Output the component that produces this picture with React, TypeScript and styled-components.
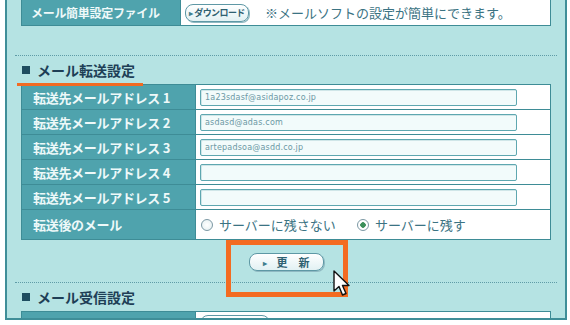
import styled, { createGlobalStyle } from "styled-components";

const GlobalStyle = createGlobalStyle`
  html, body {
    margin: 0;
    padding: 0;
    background: #ffffff;
    overflow: hidden;
  }
  body {
    font-family: "Noto Sans CJK JP", "Noto Sans", sans-serif;
  }
`;

const Page = styled.div`
  width: 570px;
  height: 325px;
  padding-left: 5px;
  box-sizing: border-box;
  background: #ffffff;
`;

const Panel = styled.div`
  width: 562px;
  height: 320px;
  box-sizing: border-box;
  background: #b5e3e3;
  border: 2px solid #3f8e98;
  border-top: none;
  padding: 0 14px;
  overflow: hidden;
`;

const Table = styled.div<{ $top?: boolean }>`
  border: 1px solid #3e8c96;
  border-top: ${(p) => (p.$top ? "none" : "1px solid #3e8c96")};
  background: #ffffff;
`;

const Row = styled.div<{ $label?: number; $h?: number }>`
  display: grid;
  grid-template-columns: ${(p) => p.$label ?? 174}px 1fr;
  height: ${(p) => p.$h ?? 24}px;
  & + & {
    border-top: 1px solid #3e8c96;
  }
`;

const Label = styled.div`
  background: #4fa3ad;
  color: #eef9f9;
  font-size: 13px;
  font-weight: bold;
  display: flex;
  align-items: center;
  padding-left: 11px;
  border-right: 1px solid #3e8c96;
  white-space: nowrap;
  letter-spacing: -0.3px;
`;

const SmallLabel = styled(Label)`
  font-size: 12px;
  padding-left: 9px;
`;

const Value = styled.div`
  display: flex;
  align-items: center;
  padding-left: 4px;
  gap: 8px;
  color: #3b7383;
  font-size: 13px;
  white-space: nowrap;
`;

const Input = styled.div`
  width: 317px;
  height: 17px;
  box-sizing: border-box;
  border: 1px solid #5ea7b0;
  border-radius: 2px;
  background: #f2fbfb;
  box-shadow: inset 1px 1px 0 #cfe6e8;
  font-family: "DejaVu Sans", sans-serif;
  font-size: 8px;
  color: #6b98a4;
  line-height: 15px;
  padding-left: 4px;
  letter-spacing: 0.2px;
`;

const PillButton = styled.div<{ $w: number; $size?: number; $gap?: number }>`
  width: ${(p) => p.$w}px;
  height: 18px;
  box-sizing: border-box;
  border: 1.5px solid #5e98a5;
  border-radius: 8px;
  background: linear-gradient(#ffffff, #e2f1f3);
  box-shadow: 1px 1px 0 #8fb9c2;
  color: #2f6171;
  font-size: ${(p) => p.$size ?? 10}px;
  font-weight: bold;
  display: flex;
  align-items: center;
  justify-content: center;
  gap: ${(p) => p.$gap ?? 10}px;
  white-space: nowrap;
  overflow: hidden;
`;

const Arrow = styled.span`
  font-size: 8px;
  color: #3f7f8e;
`;

const TinyText = styled.span`
  font-size: 9px;
  letter-spacing: -0.6px;
`;

const Note = styled.span`
  margin-left: 8px;
  font-size: 13px;
  color: #3b7383;
`;

const Divider = styled.div<{ $mt: number }>`
  margin: ${(p) => p.$mt}px -6px 0 -6px;
  border-top: 1px dotted #5f9ca7;
`;

const Heading = styled.div<{ $h: number }>`
  position: relative;
  height: ${(p) => p.$h}px;
  display: flex;
  align-items: center;
  gap: 7px;
  padding-left: 1px;
  font-size: 14px;
  font-weight: bold;
  color: #1e3f56;
`;

const Square = styled.span`
  width: 8px;
  height: 8px;
  background: #1f4d60;
`;

const Underline = styled.span`
  position: absolute;
  left: -4px;
  bottom: -2px;
  width: 126px;
  height: 3px;
  background: #f26b22;
`;

const Radio = styled.span<{ $on?: boolean }>`
  width: 12px;
  height: 12px;
  box-sizing: border-box;
  border-radius: 50%;
  border: 1px solid #7c98a4;
  background: radial-gradient(
    circle,
    ${(p) => (p.$on ? "#3c8f5a 0 2.5px, #ffffff 3px" : "#ffffff 0, #e3eef0 100%")}
  );
  margin-left: 1px;
`;

const RadioLabel = styled.label`
  display: flex;
  align-items: center;
  gap: 6px;
  margin-right: 12px;
  color: #3b7383;
  font-size: 13px;
`;

const ButtonArea = styled.div`
  height: 42px;
  display: flex;
  justify-content: center;
  padding-top: 13px;
  box-sizing: border-box;
`;

const Highlight = styled.div`
  position: relative;
`;

const HighlightBox = styled.span`
  position: absolute;
  left: -23px;
  right: -24px;
  top: -13px;
  bottom: -15px;
  border: 5px solid #f36b21;
  pointer-events: none;
`;

const Cursor = styled.svg`
  position: absolute;
  left: 84px;
  top: 17px;
`;

const addresses = [
  "1a23sdasf@asidapoz.co.jp",
  "asdasd@adas.com",
  "artepadsoa@asdd.co.jp",
  "",
  "",
];

export default function App() {
  return (
    <Page>
      <GlobalStyle />
      <Panel>
        <Table $top>
          <Row $label={159} $h={25}>
            <SmallLabel>メール簡単設定ファイル</SmallLabel>
            <Value>
              <PillButton $w={64} $gap={1}>
                <Arrow>▸</Arrow>
                <TinyText>ダウンロード</TinyText>
              </PillButton>
              <Note>※メールソフトの設定が簡単にできます。</Note>
            </Value>
          </Row>
        </Table>

        <Divider $mt={29} />
        <Heading $h={28}>
          <Square />
          メール転送設定
          <Underline />
        </Heading>

        <Table>
          {addresses.map((a, i) => (
            <Row key={i}>
              <Label>転送先メールアドレス {i + 1}</Label>
              <Value>
                <Input>{a}</Input>
              </Value>
            </Row>
          ))}
          <Row $h={29}>
            <Label>転送後のメール</Label>
            <Value>
              <RadioLabel>
                <Radio />
                サーバーに残さない
              </RadioLabel>
              <RadioLabel>
                <Radio $on />
                サーバーに残す
              </RadioLabel>
            </Value>
          </Row>
        </Table>

        <ButtonArea>
          <Highlight>
            <PillButton $w={75} $size={11}>
              <Arrow>▸</Arrow>
              <span>更　新</span>
            </PillButton>
            <HighlightBox />
            <Cursor width="20" height="28" viewBox="0 0 20 28">
              <path
                d="M1 1 L1 21 L6 16.5 L9.5 25 L13 23.5 L9.5 15.5 L16 15.5 Z"
                fill="#ffffff"
                stroke="#111111"
                strokeWidth="1.4"
                strokeLinejoin="round"
              />
            </Cursor>
          </Highlight>
        </ButtonArea>

        <Divider $mt={0} />
        <Heading $h={28}>
          <Square />
          メール受信設定
        </Heading>

        <Table>
          <Row $h={24}>
            <Label />
            <Value>
              <PillButton $w={70} />
            </Value>
          </Row>
        </Table>
      </Panel>
    </Page>
  );
}
